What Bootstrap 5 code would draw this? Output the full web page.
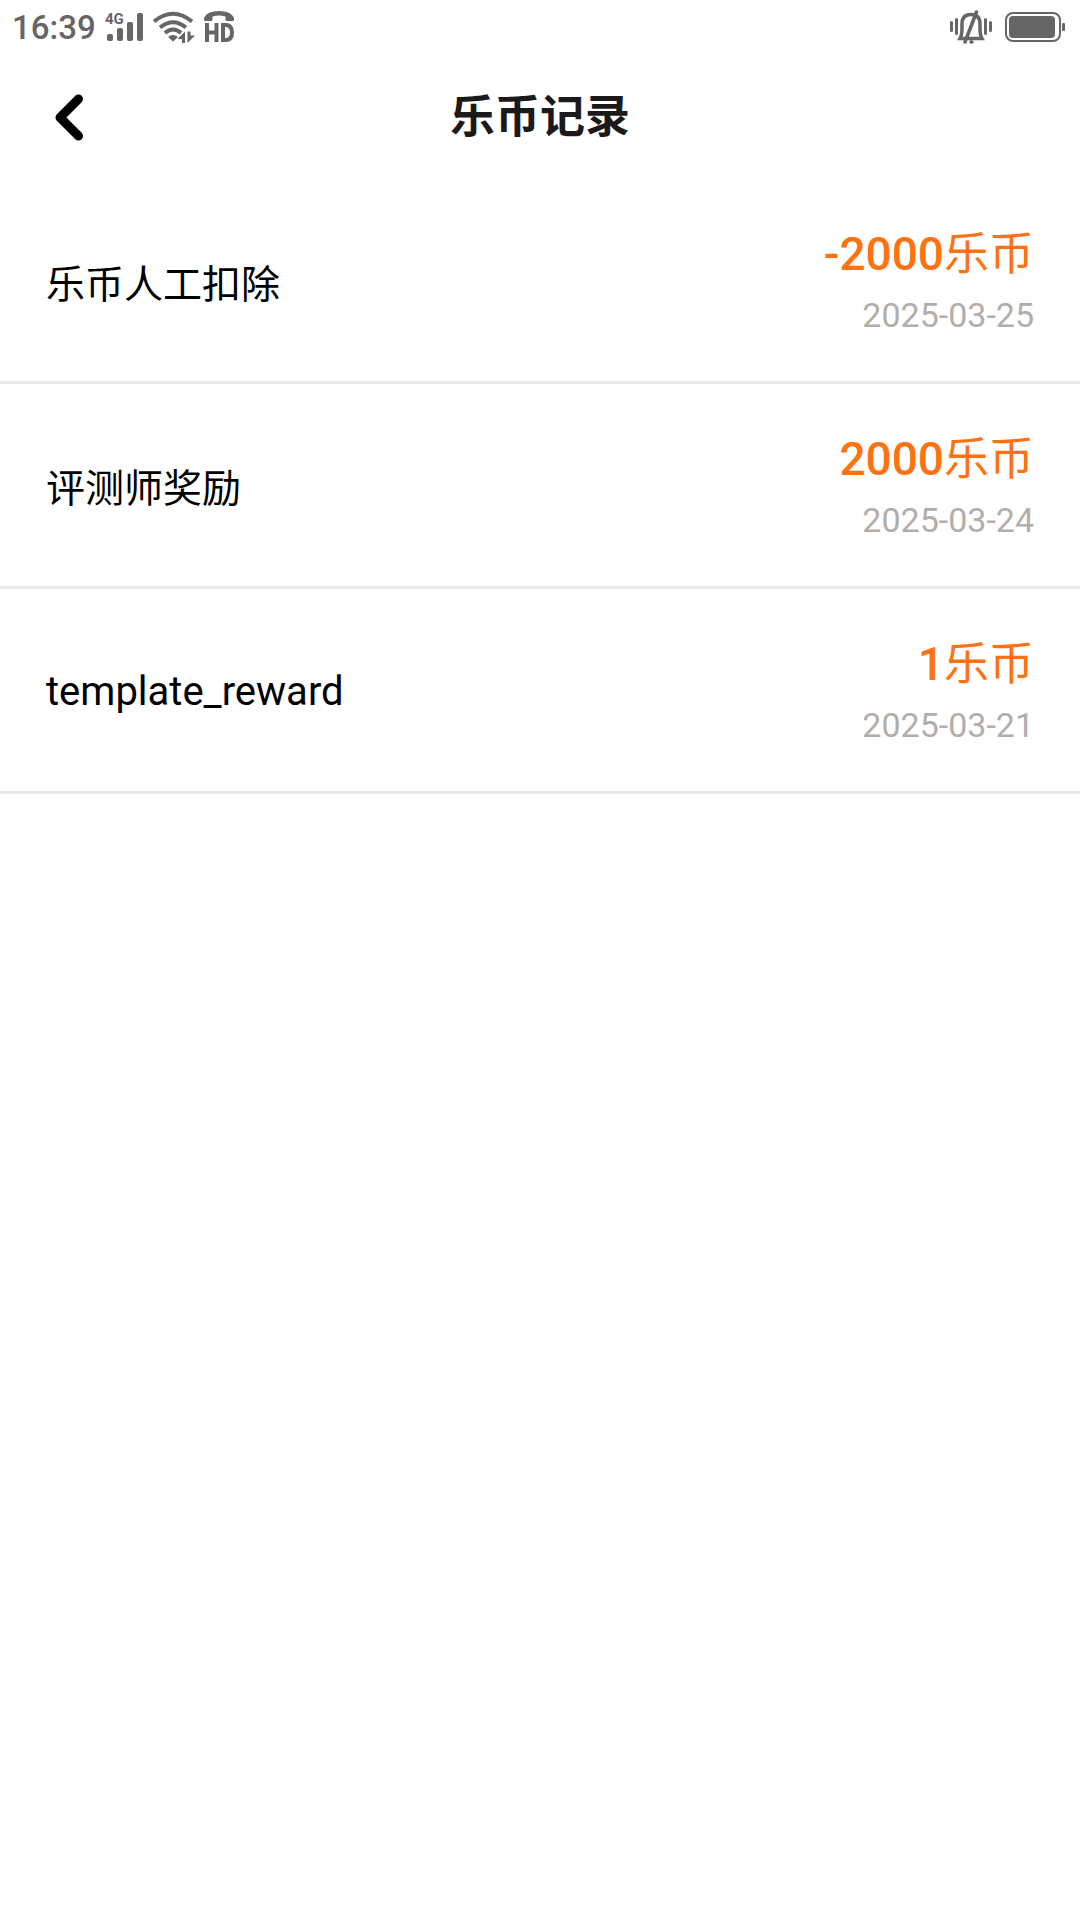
<!DOCTYPE html>
<html lang="zh-CN">
<head>
<meta charset="utf-8">
<meta name="viewport" content="width=device-width, initial-scale=1">
<title>乐币记录</title>
<link rel="stylesheet" href="https://cdn.jsdelivr.net/npm/bootstrap@5.3.0/dist/css/bootstrap.min.css">
<style>
body { font-family: Roboto, "Noto Sans CJK SC", sans-serif; color: #000; background: #fff; }
.status-bar { height: 54px; padding: 0 15px 0 12px; color: #666; font-size: 33px; line-height: 54px; font-weight: 500; }
.status-bar time { padding-top: 2px; }
.status-icons { gap: 9px; margin-left: 9px; }
.title-bar { height: 126px; padding: 0 45px; }
.title-bar .side { width: 48px; height: 54px; }
.page-title { padding-top: 2px; font-size: 45px; line-height: 60px; font-weight: 700; color: #1a1a1a; }
.record { height: 205px; padding: 8px 46px 0; border-bottom: 3px solid #e9e9e9; }
.record:first-child { height: 204px; }
.record-name { font-size: 39px; line-height: 52px; }
.record-name:lang(en) { font-size: 40px; line-height: 56px; padding-bottom: 4px; }
.record-amount { font-size: 46px; line-height: 60px; color: #ff7210; font-weight: 500; }
.record-amount .unit { font-size: 45px; font-weight: 400; }
.record-date { font-size: 34px; line-height: 60px; color: #b3adab; }
</style>
</head>
<body>
<header>
  <div class="status-bar d-flex align-items-center justify-content-between">
    <div class="d-flex align-items-center">
      <time>16:39</time>
      <div class="status-icons d-flex align-items-center">
        <svg width="39" height="36" viewBox="0 0 39 36" fill="#666" role="img" aria-label="4G">
          <text x="0" y="15" font-size="15" font-weight="700">4G</text>
          <rect x="2" y="25" width="6" height="7" rx="2"/><rect x="12" y="19" width="6" height="13" rx="2"/><rect x="22" y="13" width="6" height="19" rx="2"/><rect x="32" y="4" width="6" height="28" rx="2"/>
        </svg>
        <svg width="42" height="36" viewBox="0 0 42 36" fill="none" stroke="#666" stroke-width="4" role="img" aria-label="Wi-Fi">
          <path d="M1 12.500Q20 -3 39 12.500M7 18.500Q20 8 33 18.500M12 24Q20 17 28 24"/>
          <path d="M15 28Q20 24 25 28L20 32.500Z" fill="#666" stroke="none"/>
          <path d="M32 22.500V34H29V30H24.500ZM34.500 22.500V34L42 26.500H37.500V22.500Z" fill="#666" stroke="none"/>
        </svg>
        <svg width="31" height="36" viewBox="0 0 31 36" fill="#666" role="img" aria-label="HD">
          <path d="M0 11V9Q3 2 15 2T30 9V11Q30 12 28.500 12H23Q21.500 12 21.500 11V7.500Q15 5.500 8.500 7.500V11Q8.500 12 7 12H1.500Q0 12 0 11Z"/>
          <path d="M3 14V33M12.500 14V33M3 23.500H12.500M19 16H21.500Q28 16 28 23.500T21.500 31H19Z" fill="none" stroke="#666" stroke-width="4"/>
        </svg>
      </div>
    </div>
    <div class="d-flex align-items-center gap-2">
      <svg width="50" height="36" viewBox="0 0 50 36" fill="none" stroke="#666" stroke-width="3" stroke-linecap="round" role="img" aria-label="静音">
        <path d="M4.500 13.500V21.500M9.500 10.500V24.500M38.500 10.500V24.500M43.500 13.500V21.500"/>
        <path d="M13 29.500Q15 26 15 19V15Q15 5.500 24 5.500T33 15V19Q33 26 35 29.500Z" stroke-width="3.500"/>
        <path d="M29.500 3L18 33M24 33H25" stroke-width="3.500"/>
      </svg>
      <svg width="60" height="36" viewBox="0 0 60 36" fill="#666" role="img" aria-label="电量">
        <rect x="1" y="4" width="54" height="28" rx="7" fill="none" stroke="#666" stroke-width="2"/>
        <rect x="4" y="7" width="46" height="22" rx="4"/><rect x="57" y="14" width="3" height="8" rx="1"/>
      </svg>
    </div>
  </div>
  <nav class="title-bar d-flex align-items-center justify-content-between" aria-label="页面导航">
    <button type="button" class="side btn p-0 border-0 d-flex align-items-center justify-content-center" aria-label="返回">
      <svg width="30" height="48" viewBox="0 0 30 48" fill="none" stroke="#000" stroke-width="9" stroke-linecap="round" stroke-linejoin="round"><path d="M24.500 6L6 24.500L24.500 43"/></svg>
    </button>
    <h1 class="page-title mb-0">乐币记录</h1>
    <span class="side"></span>
  </nav>
</header>
<main>
  <ul class="list-unstyled m-0">
    <li class="record d-flex align-items-center justify-content-between">
      <span class="record-name">乐币人工扣除</span>
      <div class="text-end">
        <div class="record-amount">-2000<span class="unit">乐币</span></div>
        <time class="record-date d-block" datetime="2025-03-25">2025-03-25</time>
      </div>
    </li>
    <li class="record d-flex align-items-center justify-content-between">
      <span class="record-name">评测师奖励</span>
      <div class="text-end">
        <div class="record-amount">2000<span class="unit">乐币</span></div>
        <time class="record-date d-block" datetime="2025-03-24">2025-03-24</time>
      </div>
    </li>
    <li class="record d-flex align-items-center justify-content-between">
      <span class="record-name" lang="en">template_reward</span>
      <div class="text-end">
        <div class="record-amount">1<span class="unit">乐币</span></div>
        <time class="record-date d-block" datetime="2025-03-21">2025-03-21</time>
      </div>
    </li>
  </ul>
</main>
<script src="https://cdn.jsdelivr.net/npm/bootstrap@5.3.0/dist/js/bootstrap.bundle.min.js"></script>
</body>
</html>
